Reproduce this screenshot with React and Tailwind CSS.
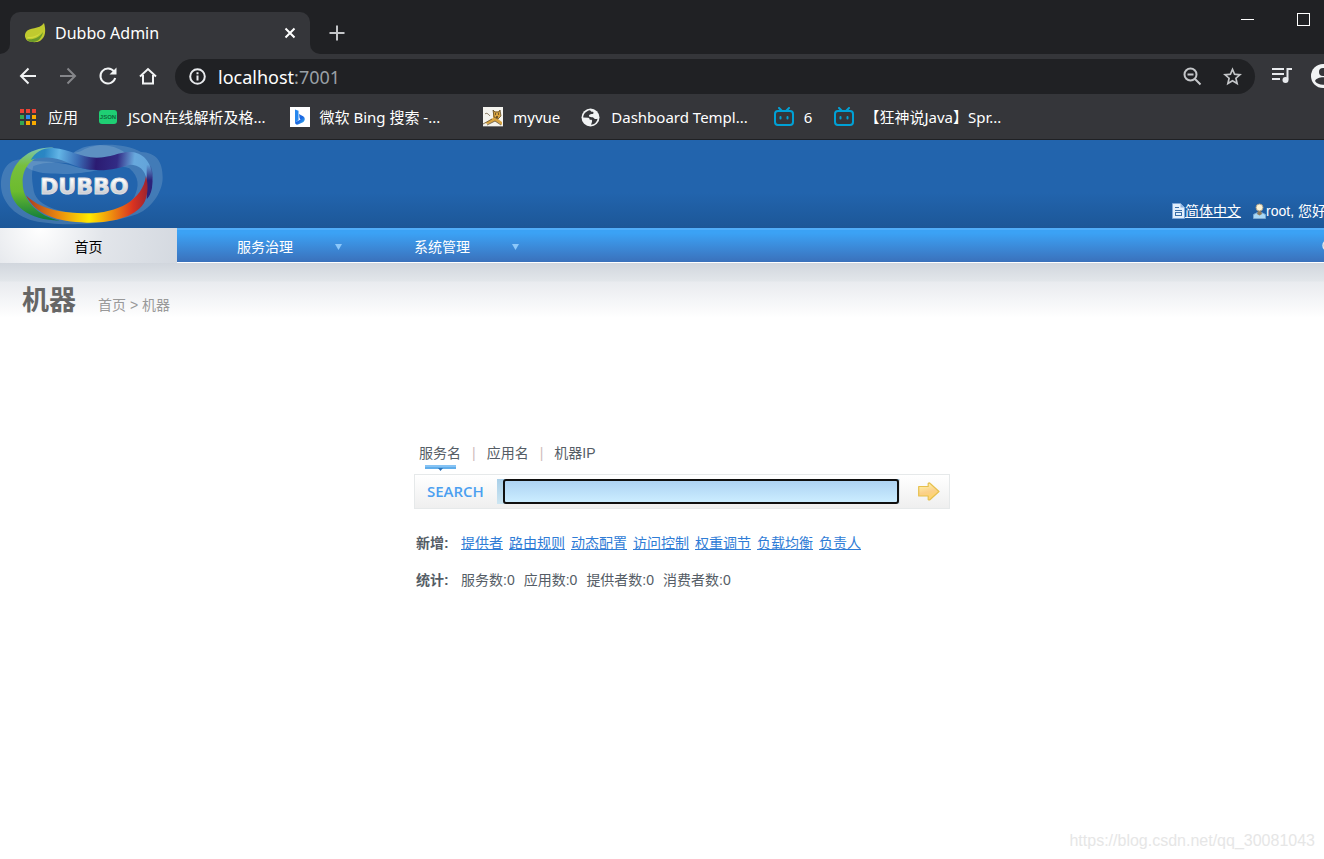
import React from "react";

const addLinks = ["提供者", "路由规则", "动态配置", "访问控制", "权重调节", "负载均衡", "负责人"];

const stats = ["服务数:0", "应用数:0", "提供者数:0", "消费者数:0"];

const LeafIcon = () => (
    <svg width="22" height="22" viewBox="0 0 22 22" aria-hidden="true">
        <path d="M20 1c2 7 2 14-4 18-4 2-9 1-12 0-3-2-4-6-2-9C5 5 15 8 20 1z" fill="#c0ca2f" />
        <path d="M3 17c6 1 12-1 16-7-1 6-5 10-10 10-3 0-5-1-6-3z" fill="#6a9a2a" />
        <path d="M3 16c7 1 12-2 15-7-3 4-8 6-14 6z" fill="#d3dc3c" />
    </svg>
);

const AppsIcon = () => {
    const colors = ["#ea4335", "#ea4335", "#ea4335", "#34a853", "#2a8af6", "#f9ab00", "#34a853", "#f9ab00", "#f9ab00"];
    return (
        <svg width="17" height="17" viewBox="0 0 17 17" aria-hidden="true">
            {colors.map((c, i) => (
                <rect key={i} x={(i % 3) * 6} y={Math.floor(i / 3) * 6} width="4" height="4" fill={c} />
            ))}
        </svg>
    );
};

const JsonIcon = () => (
    <svg width="18" height="14" viewBox="0 0 18 14" aria-hidden="true">
        <rect width="18" height="14" rx="3" fill="#1fcf74" />
        <text x="9" y="9" textAnchor="middle" fontSize="6" fontWeight="bold" fontFamily="Liberation Sans, sans-serif" fill="#0c6b3a">JSON</text>
    </svg>
);

const BingIcon = () => (
    <svg width="20" height="20" viewBox="0 0 20 20" aria-hidden="true">
        <defs>
            <linearGradient id="bing" x1="0" y1="0" x2="1" y2="1">
                <stop offset="0" stopColor="#2a8cf0" />
                <stop offset="0.5" stopColor="#1b62e0" />
                <stop offset="1" stopColor="#38c0ee" />
            </linearGradient>
        </defs>
        <rect width="20" height="20" fill="#fff" />
        <path d="M5 2.500l3.500 1.200v9.300l-3.500 3z" fill="#2787ee" />
        <path d="M9 7l4.500 2.500c2 1.500 1.500 4.500-.500 5.700L8 17.500c-1.500.500-3-.500-3-2l5.500-3-1-1.500z" fill="url(#bing)" />
    </svg>
);

const CatIcon = () => (
    <svg width="20" height="20" viewBox="0 0 20 20" aria-hidden="true">
        <rect width="20" height="20" fill="#f4f3ee" />
        <path d="M10 3l2 1.500h3L17 3l1 6-3 3 4 3v3l-7-4-7 3-3-1 8-5z" fill="#d9a441" />
        <path d="M0 17l9-5M2 7c2-2 4 1 5 2M4 18l8-4 6 4M10 3l2 2h4l1-2 1 6-3 3-4-2z" stroke="#5d4b2c" strokeWidth="0.800" fill="none" />
        <path d="M12 7h1M15 7h1M13 10l2 0" stroke="#111" strokeWidth="1.200" />
        <path d="M0 19.500h20" stroke="#777" />
    </svg>
);

const GlobeIcon = () => (
    <svg width="19" height="19" viewBox="0 0 19 19" aria-hidden="true">
        <circle cx="9.500" cy="9.500" r="9" fill="#f1f3f4" />
        <path d="M9 2.300C5 3 2.300 6 2.200 9.500l5 .200c1 .300 1.500 1 1.500 2h2c1 1.300 0 3-.700 5 3.500-.200 6-2.700 6.500-6-2 .800-3 .300-3.700-.700-1-1.300-3-.500-4.300-1.200-1-.800-.500-2.300 1-2.600 1.800-.300 2.800.200 3-1.200.200-1.500-1-1-2-1.200z" fill="#35363a" />
    </svg>
);

const BiliIcon = () => (
    <svg width="20" height="20" viewBox="0 0 20 20" fill="none" stroke="#00a1d6" strokeWidth="2" strokeLinecap="round" aria-hidden="true">
        <rect x="1" y="4" width="18" height="14" rx="3" />
        <path d="M5 1l3 3M15 1l-3 3M6.500 10v1.500M13.500 10v1.500" />
    </svg>
);

const bookmarks = [
    { label: "应用", icon: <AppsIcon />, box: "w-[18px] mr-[10px]", item: "mr-[21px]" },
    { label: "JSON在线解析及格...", icon: <JsonIcon />, box: "w-[18px] mr-[11px]", item: "mr-6" },
    { label: "微软 Bing 搜索 -...", icon: <BingIcon />, box: "w-5 mr-[10px]", item: "mr-[43px]" },
    { label: "myvue", icon: <CatIcon />, box: "w-5 mr-[10px]", item: "mr-[21px]" },
    { label: "Dashboard Templ...", icon: <GlobeIcon />, box: "w-5 mr-[10px]", item: "mr-[26px]" },
    { label: "6", icon: <BiliIcon />, box: "w-5 mr-[10px]", item: "mr-[22px]" },
    { label: "【狂神说Java】Spr...", icon: <BiliIcon />, box: "w-5 mr-[10px]", item: "" },
];

const DubboLogo = () => (
    <svg width="164" height="88" viewBox="0 12 492 264" role="img" aria-label="DUBBO">
        <defs>
            <linearGradient id="green" x1="0.600" y1="0" x2="0.600" y2="1">
                <stop offset="0" stopColor="#7cc6b4" />
                <stop offset="0.250" stopColor="#78bf3c" />
                <stop offset="0.600" stopColor="#6cbb2e" />
                <stop offset="1" stopColor="#0c7a3c" />
            </linearGradient>
            <linearGradient id="top" x1="95" y1="0" x2="458" y2="40" gradientUnits="userSpaceOnUse">
                <stop offset="0" stopColor="#2787bd" />
                <stop offset="0.120" stopColor="#2a86c4" />
                <stop offset="0.240" stopColor="#63b5e6" />
                <stop offset="0.400" stopColor="#3a6db6" />
                <stop offset="0.550" stopColor="#2b1b72" />
                <stop offset="0.720" stopColor="#322b85" />
                <stop offset="0.860" stopColor="#68a9dd" />
                <stop offset="1" stopColor="#62a4da" />
            </linearGradient>
            <linearGradient id="side" x1="0" y1="0" x2="0" y2="1">
                <stop offset="0" stopColor="#2c2379" stopOpacity="0" />
                <stop offset="0.450" stopColor="#2c2379" />
            </linearGradient>
            <linearGradient id="fire" x1="0" y1="0" x2="1" y2="0">
                <stop offset="0" stopColor="#a63b22" />
                <stop offset="0.250" stopColor="#e88410" />
                <stop offset="0.520" stopColor="#ffea00" />
                <stop offset="0.700" stopColor="#ef8f0e" />
                <stop offset="0.880" stopColor="#d93220" />
                <stop offset="1" stopColor="#9c2430" />
            </linearGradient>
            <linearGradient id="steel" x1="0" y1="0" x2="0" y2="1">
                <stop offset="0.200" stopColor="#fff" />
                <stop offset="1" stopColor="#b9bbc0" />
            </linearGradient>
        </defs>
        <path fill="#8fb4cf" fillOpacity="0.300" fillRule="evenodd" d="M60 70C15 75 2 115 3 150c2 50 45 95 110 107 90 14 200 10 290-20 50-15 85-70 85-112 0-50-20-75-65-77-50-28-140-28-175-5-30 15-110 15-135 20zM100 90c50-20 130-10 190 12 50-5 75-15 98-5 30 25 30 55 15 85-25 42-90 50-150 50-80 0-150-25-153-75-5-30-5-50 0-67z" />
        <path fill="#9bc0dd" fillOpacity="0.300" d="M210 60c40-45 130-40 165-10-40 10-100 25-165 10zM60 75c60 0 90 0 140 10 40 10 60 20 100 17-60 10-90 15-160 10-30-3-60-10-80-37z" />
        <path fill="url(#green)" d="M160 35C95 30 30 75 30 148c0 60 55 105 150 106C115 240 68 195 68 140c0-42 20-78 92-92z" />
        <path fill="url(#top)" d="M92 72C105 48 130 34 160 36c50 3 80 29 130 29 45 0 70-20 105-17 40 4 63 37 63 87-1 30-8 46-18 55V130c-5-28-22-44-50-44-35 10-70 22-130 14C205 90 175 48 92 72z" />
        <path fill="url(#side)" d="M440 85l13 5c5 14 5 30 5 45-1 30-8 46-18 55z" />
        <path fill="url(#fire)" d="M78 178c40 40 100 54 185 54 90 0 165-40 175-112 8 30 5 55-3 75-22 45-90 66-175 65-90-2-155-25-182-82z" />
        <text x="120" y="174" fontSize="66" fontWeight="bold" fontFamily="DejaVu Sans, sans-serif" fill="url(#steel)" stroke="#dcdde1" strokeWidth="3" strokeLinejoin="round">DUBBO</text>
    </svg>
);

const BrowserChrome = () => (
    <div className="bg-[#35363a] font-['Noto_Sans','Noto_Sans_CJK_SC',sans-serif] text-white">
        <div className="flex h-[54px] items-end bg-[#202124]">
            <div className="h-[10px] w-[10px] bg-[#35363a]">
                <div className="h-full w-full rounded-br-[10px] bg-[#202124]" />
            </div>
            <div className="flex h-[42px] w-[300px] items-center rounded-t-[10px] bg-[#35363a] pr-3 pl-[14px]">
                <LeafIcon />
                <span className="ml-[9px] flex-1 text-base">Dubbo Admin</span>
                <button aria-label="关闭标签页" className="flex h-4 w-4 items-center justify-center">
                    <svg width="12" height="12" viewBox="0 0 12 12" stroke="#fff" strokeWidth="2"><path d="M1.500 1.500l9 9M10.500 1.500l-9 9" /></svg>
                </button>
            </div>
            <div className="h-[10px] w-[10px] bg-[#35363a]">
                <div className="h-full w-full rounded-bl-[10px] bg-[#202124]" />
            </div>
            <button aria-label="新标签页" className="mb-[13px] ml-[9px]">
                <svg width="16" height="16" viewBox="0 0 16 16" stroke="#c4c6c9" strokeWidth="2"><path d="M8 0.500v15M0.500 8h15" /></svg>
            </button>
            <div className="mr-[54px] ml-auto flex items-center gap-[43px] self-start pt-[13px]">
                <button aria-label="最小化">
                    <svg width="13" height="13" viewBox="0 0 13 13"><rect y="6" width="13" height="1" fill="#fff" /></svg>
                </button>
                <button aria-label="最大化">
                    <svg width="13" height="13" viewBox="0 0 13 13" fill="none" stroke="#fff"><rect x="0.500" y="0.500" width="12" height="12" /></svg>
                </button>
            </div>
        </div>

        <div className="flex h-11 items-center pr-7 pl-[18px]">
            <div className="flex items-center gap-5">
                <button aria-label="后退">
                    <svg width="20" height="20" viewBox="0 0 20 20" fill="none" stroke="#f1f3f4" strokeWidth="2"><path d="M18 10H3.500M10.500 2.500L3 10l7.500 7.500" /></svg>
                </button>
                <button aria-label="前进">
                    <svg width="20" height="20" viewBox="0 0 20 20" fill="none" stroke="#85868a" strokeWidth="2"><path d="M2 10h14.500M9.500 2.500L17 10l-7.500 7.500" /></svg>
                </button>
                <button aria-label="重新加载">
                    <svg width="20" height="20" viewBox="0 0 20 20" fill="none" stroke="#f1f3f4" strokeWidth="2"><path d="M16 5.500A7.500 7.500 0 1 0 17.200 12" /><path d="M18.500 1.500v7h-7z" fill="#f1f3f4" stroke="none" /></svg>
                </button>
                <button aria-label="主页">
                    <svg width="20" height="20" viewBox="0 0 20 20" fill="none" stroke="#f1f3f4" strokeWidth="2"><path d="M2 10.500L10 3l8 7.500M5 9v8.500h10V9" /></svg>
                </button>
            </div>
            <div className="mt-px ml-[17px] flex h-[35px] flex-1 items-center rounded-full bg-[#202124] pr-[13px] pl-[14px]">
                <svg width="17" height="17" viewBox="0 0 17 17" fill="none" stroke="#e8eaed" strokeWidth="2" aria-hidden="true">
                    <circle cx="8.500" cy="8.500" r="7.300" />
                    <path d="M8.500 7.500v5M8.500 4.300v2" />
                </svg>
                <a href="#address" className="ml-3 flex-1 text-lg leading-6">localhost<span className="text-[#9aa0a6]">:7001</span></a>
                <button aria-label="缩放" className="mr-[21px]">
                    <svg width="19" height="19" viewBox="0 0 19 19" fill="none" stroke="#c4c6c9" strokeWidth="2"><circle cx="7.500" cy="7.500" r="6" /><path d="M4.500 7.500h6M12 12l5.500 5.500" /></svg>
                </button>
                <button aria-label="收藏">
                    <svg width="19" height="19" viewBox="1 1 22 22" fill="#c4c6c9"><path d="M23 9.240l-7.910-.680L12 1.300 8.910 8.570 1 9.240l6 5.210L5.200 22.200 12 18.090l6.800 4.110-1.790-7.750L23 9.240zM12 15.800l-3.900 2.350 1.030-4.440-3.440-2.980 4.540-.400L12 6.150l1.770 4.190 4.540.400-3.440 2.980 1.030 4.440L12 15.800z" /></svg>
                </button>
            </div>
            <button aria-label="媒体控件" className="ml-[17px]">
                <svg width="20" height="18" viewBox="0 0 20 18" fill="#e8eaed"><path d="M0 1h12v2H0zM0 6h12v2H0zM0 11h8v2H0z" /><path d="M14.500 1H20v2h-3.500v9.500h-2z" /><circle cx="13.500" cy="13" r="3" /></svg>
            </button>
            <button aria-label="用户" className="ml-[18px]">
                <svg width="26" height="26" viewBox="0 0 26 26"><circle cx="13" cy="13" r="12" fill="#f1f3f4" /><circle cx="13" cy="9" r="4" fill="#35363a" /><path d="M5 18c2-5 14-5 16 0-3 5-13 5-16 0z" fill="#35363a" /></svg>
            </button>
        </div>

        <nav className="flex h-[42px] items-center border-b border-[#202124] pb-[3px] pl-5 text-[15px] whitespace-nowrap">
            {bookmarks.map((b, i) => (
                <a key={i} href="#bookmark" className={`flex items-center ${b.item}`}>
                    <span className={`flex shrink-0 items-center ${b.box}`}>{b.icon}</span>
                    {b.label}
                </a>
            ))}
        </nav>
    </div>
);

const Header = () => (
    <header>
        <div className="flex h-[88px] items-start justify-between bg-linear-to-b from-[#2264ad] from-60% to-[#1c5798] pr-[38px]">
            <DubboLogo />
            <div className="flex items-center self-end pb-[7px] text-sm text-white">
                <svg width="13" height="16" viewBox="0 0 13 16" aria-hidden="true">
                    <path d="M0.500 0.500h8l4 4v11h-12z" fill="#e3effb" stroke="#7fa8da" />
                    <path d="M8.500 0.500v4h4z" fill="#8fb3df" />
                    <path d="M3 4.500h4M3 7.500h7" stroke="#3b6fa8" />
                    <rect x="3.500" y="9.500" width="6" height="3" fill="none" stroke="#3b6fa8" />
                </svg>
                <a href="#language" className="underline">简体中文</a>
                <svg className="ml-3" width="13" height="16" viewBox="0 0 13 16" aria-hidden="true">
                    <path d="M0.500 15.500v-4l4-2h4l4 2v4z" fill="#a9d8f5" stroke="#7aa7d0" />
                    <path d="M5 8h3l1 3-2.500 1.500L4 11z" fill="#8a7b62" />
                    <circle cx="6.500" cy="4.500" r="3.500" fill="#fbf3d6" stroke="#a79f8c" />
                </svg>
                <span>root, 您好</span>
            </div>
        </div>
        <nav className="flex h-[35px] items-stretch border-b border-white bg-linear-to-b from-[#3ba2f5] from-15% to-[#3a71bb] text-sm text-white shadow-[inset_0_2px_0_#51aefa]">
            <a href="#home" className="-mb-px flex w-[177px] items-center justify-center bg-[radial-gradient(circle_at_40px_0,#fff,#e2e5ea_45%,#d4d9e0)] pt-[2px] text-black">首页</a>
            {["服务治理", "系统管理"].map((name) => (
                <a key={name} href="#menu" className="flex w-[177px] items-center pt-1 pr-3 pl-[60px]">
                    {name}
                    <svg className="ml-[42px]" width="7" height="6" viewBox="0 0 7 6" aria-hidden="true"><path d="M0 0h7L3.500 6z" fill="#8cc8fa" /></svg>
                </a>
            ))}
            <a href="#logout" aria-label="退出" className="mr-[29px] ml-auto flex items-center">
                <svg width="13" height="13" viewBox="0 0 13 13"><circle cx="6.500" cy="6.500" r="5.500" fill="#8c94a6" stroke="#e6e6ea" strokeWidth="1.500" /></svg>
            </a>
        </nav>
    </header>
);

const SearchPanel = () => (
    <main className="mx-auto mt-[124px] w-[536px] text-sm text-[#555d66]">
        <div className="flex h-[31px] items-start pl-[5px] leading-5">
            <div className="flex flex-col items-center">
                <a href="#service">服务名</a>
                <svg className="mt-[2px]" width="31" height="6" viewBox="0 0 31 6" aria-hidden="true"><path d="M0 0h31v4H0z" fill="#62aeea" /><path d="M0 0h31v2H0z" fill="#86c3f4" /><path d="M13 3h5l-2.500 3z" fill="#2c72b8" /></svg>
            </div>
            <span className="mx-[11px] text-[#d0bcbc]">|</span>
            <a href="#application">应用名</a>
            <span className="mx-[11px] text-[#d0bcbc]">|</span>
            <a href="#machine">机器IP</a>
        </div>
        <form className="flex h-[35px] items-center border border-[#e6e9ea] bg-linear-to-b from-white to-[#efefef] pr-[9px] pl-3" onSubmit={(e) => e.preventDefault()}>
            <label htmlFor="keyword" className="w-[70px] font-['Open_Sans',sans-serif] text-[15px] font-semibold text-[#4b9ff0]">SEARCH</label>
            <div className="flex h-[25px] flex-1 border-r border-[#dfe6ec] bg-linear-to-b from-[#a9cfe8] to-[#cde6f2] pl-[6px]">
                <input id="keyword" type="text" className="min-w-0 flex-1 rounded-[3px] border-2 border-[#101010] bg-linear-to-b from-[#aed3f3] to-[#cbedff] px-1 outline-none" />
            </div>
            <button aria-label="搜索" className="ml-[18px]">
                <svg width="22" height="19" viewBox="0 0 22 19">
                    <defs>
                        <linearGradient id="gold" x1="0" y1="0" x2="0.300" y2="1">
                            <stop offset="0" stopColor="#fffbb0" />
                            <stop offset="0.600" stopColor="#fbd08a" />
                            <stop offset="1" stopColor="#ffd56a" />
                        </linearGradient>
                    </defs>
                    <path d="M0.700 4.500h9.500V1.500q1-1 2 0l8.800 8-8.800 8q-1 1-2 0v-3.500H0.700z" fill="url(#gold)" stroke="#e6c04e" strokeWidth="1.200" strokeLinejoin="round" />
                </svg>
            </button>
        </form>
        <div className="mt-6 flex gap-[6px] pl-[2px] leading-5">
            <b className="w-[39px] whitespace-nowrap">新增:</b>
            {addLinks.map((name) => (
                <a key={name} href="#add" className="text-[#2f7cd6] underline">{name}</a>
            ))}
        </div>
        <div className="mt-[17px] flex gap-[9px] pl-[2px] leading-5">
            <b className="w-9 whitespace-nowrap">统计:</b>
            {stats.map((item) => (
                <span key={item}>{item}</span>
            ))}
        </div>
    </main>
);

const App = () => {
    return (
        <div className="min-h-screen overflow-hidden bg-white">
            <div className="-mr-10 flex min-h-screen flex-col font-['Liberation_Sans','Noto_Sans_CJK_SC',sans-serif]">
                <BrowserChrome />
                <Header />
                <div className="flex flex-1 flex-col bg-[linear-gradient(#d1d6dd,#e2e6ea_18px,#e9ebef_19px,#fff_55px)]">
                    <div className="flex h-14 items-end pl-[22px]">
                        <h1 className="text-[27px] leading-9 font-bold text-[#666]">机器</h1>
                        <p className="ml-[22px] pb-1 text-sm text-[#999]"><a href="#home">首页</a> &gt; 机器</p>
                    </div>
                    <SearchPanel />
                    <footer className="mt-auto mr-[49px] mb-[6px] text-right text-base text-[#e6e6e6]">https://blog.csdn.net/qq_30081043</footer>
                </div>
            </div>
        </div>
    );
};

export default App;
